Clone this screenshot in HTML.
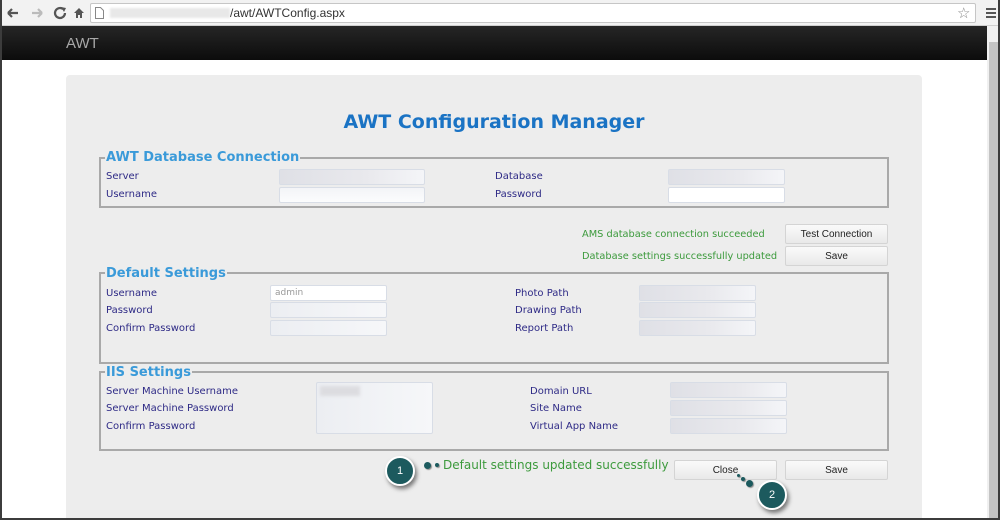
<!DOCTYPE html>
<html><head><meta charset="utf-8"><style>
*{margin:0;padding:0;box-sizing:border-box}
body{width:1000px;height:520px;overflow:hidden;background:#fff;font-family:"DejaVu Sans","Liberation Sans",sans-serif;position:relative}
.a{position:absolute}
.frame{position:absolute;left:0;top:0;width:1000px;height:520px;border:2px solid #3c3c3c;border-top:none;pointer-events:none}
.chrome{left:0;top:0;width:1000px;height:26px;background:#f2f2f2;border-bottom:1px solid #cfcfcf}
.url{left:90px;top:3px;width:886px;height:20px;background:#fff;border:1px solid #c6c6c6;border-radius:2px}
.nav{left:0;top:26px;width:988px;height:34px;background:linear-gradient(#262626,#0c0c0c)}
.sb{left:987px;top:26px;width:13px;height:494px;background:#f0f0f0}
.panel{left:66px;top:75px;width:856px;height:445px;background:#ededed;border-radius:4px 4px 0 0}
.fs{border:2px solid #a9a9a9}
.lg{font-weight:bold;font-size:13px;color:#3a9ad9;background:#ededed;padding:0 1px;line-height:14px}
.l{font-size:10px;color:#2e2a86;line-height:12px}
.in{background:linear-gradient(#f3f4f7,#fbfcfd);border:1px solid #d8dde6;border-radius:2px;height:16px}
.blur{background:linear-gradient(90deg,#dfe0e6,#e9e9ed 60%,#f4f5f8)}
.lt{background:linear-gradient(90deg,#eceef2,#f6f7f9)}
.g{font-size:9.8px;color:#3c9a3c;line-height:12px}
.btn{background:linear-gradient(#fafafa,#e9e9e9);border:1px solid #d4d4d4;border-radius:2px;font-family:"Liberation Sans",sans-serif;font-size:10px;color:#222;text-align:center;line-height:20px;height:20px}
.c{width:30px;height:30px;border-radius:50%;background:#1c5a5e;border:2px solid #fff;box-shadow:2px 3px 4px rgba(0,0,0,.5);color:#fff;font-family:"Liberation Sans",sans-serif;font-size:11px;text-align:center;line-height:26px}
.d{border-radius:50%;background:#1c5a5e;box-shadow:1px 1px 1px rgba(0,0,0,.4)}
</style></head><body>
<div class="a chrome"></div>
<svg class="a" style="left:4px;top:5px" width="82" height="16" viewBox="0 0 82 16">
<path d="M4 8h10M4 8l4-4M4 8l4 4" stroke="#555" stroke-width="2.2" fill="none"/>
<path d="M28 8h10M38 8l-4-4M38 8l-4 4" stroke="#bbb" stroke-width="2.2" fill="none"/>
<path d="M59 4a5 5 0 1 0 2 4" stroke="#555" stroke-width="2.2" fill="none"/><path d="M57 2l5 1-2 4z" fill="#555"/>
<path d="M70 8l5-5 5 5h-2v5h-2v-3h-2v3h-2v-5z" fill="#555"/>
</svg>
<div class="a url"></div>
<svg class="a" style="left:95px;top:7px" width="9" height="12"><path d="M.5.5h5l3 3v8h-8z" fill="#fff" stroke="#888"/></svg>
<div class="a" style="left:110px;top:8px;width:120px;height:10px;background:#e8e8e8;filter:blur(1px)"></div>
<div class="a" style="left:230px;top:6px;font-family:'Liberation Sans',sans-serif;font-size:12px;color:#333">/awt/AWTConfig.aspx</div>
<div class="a" style="left:957px;top:4px;font-size:15px;color:#888">☆</div>
<div class="a" style="left:986px;top:8px;width:10px;height:2px;background:#555;box-shadow:0 4px #555,0 8px #555"></div>
<div class="a nav"></div>
<div class="a" style="left:66px;top:35px;font-family:'Liberation Sans',sans-serif;font-size:15px;color:#a8a8a8">AWT</div>
<div class="a sb"><div style="position:absolute;left:2px;top:16px;width:9px;height:478px;background:#c4c4c4"></div></div>
<div class="a panel"></div>
<div class="a" style="left:66px;top:111px;width:856px;text-align:center;font-weight:bold;font-size:19px;color:#1a73c4">AWT Configuration Manager</div>

<div class="a fs" style="left:99px;top:157px;width:790px;height:51px"></div>
<div class="a lg" style="left:105px;top:151px">AWT Database Connection</div>
<div class="a l" style="left:106px;top:171px">Server</div>
<div class="a l" style="left:106px;top:189px">Username</div>
<div class="a in blur" style="left:279px;top:169px;width:146px"></div>
<div class="a in" style="left:279px;top:187px;width:146px"></div>
<div class="a l" style="left:495px;top:171px">Database</div>
<div class="a l" style="left:495px;top:189px">Password</div>
<div class="a in blur" style="left:668px;top:169px;width:117px"></div>
<div class="a in" style="left:668px;top:187px;width:117px;background:#fff"></div>

<div class="a g" style="left:582px;top:229px">AMS database connection succeeded</div>
<div class="a g" style="left:582px;top:251px">Database settings successfully updated</div>
<div class="a btn" style="left:785px;top:224px;width:103px">Test Connection</div>
<div class="a btn" style="left:785px;top:246px;width:103px">Save</div>

<div class="a fs" style="left:99px;top:272px;width:790px;height:92px"></div>
<div class="a lg" style="left:105px;top:267px">Default Settings</div>
<div class="a l" style="left:106px;top:288px">Username</div>
<div class="a l" style="left:106px;top:305px">Password</div>
<div class="a l" style="left:106px;top:323px">Confirm Password</div>
<div class="a in" style="left:270px;top:285px;width:117px;background:#fff;font-size:9px;color:#999;padding-left:4px;line-height:14px">admin</div>
<div class="a in lt" style="left:270px;top:302px;width:117px"></div>
<div class="a in lt" style="left:270px;top:320px;width:117px"></div>
<div class="a l" style="left:515px;top:288px">Photo Path</div>
<div class="a l" style="left:515px;top:305px">Drawing Path</div>
<div class="a l" style="left:515px;top:323px">Report Path</div>
<div class="a in blur" style="left:639px;top:285px;width:117px"></div>
<div class="a in blur" style="left:639px;top:302px;width:117px"></div>
<div class="a in blur" style="left:639px;top:320px;width:117px"></div>

<div class="a fs" style="left:99px;top:371px;width:790px;height:80px"></div>
<div class="a lg" style="left:105px;top:366px">IIS Settings</div>
<div class="a l" style="left:106px;top:386px">Server Machine Username</div>
<div class="a l" style="left:106px;top:403px">Server Machine Password</div>
<div class="a l" style="left:106px;top:421px">Confirm Password</div>
<div class="a in lt" style="left:316px;top:382px;width:117px;height:52px"></div>
<div class="a" style="left:320px;top:386px;width:40px;height:10px;background:#dcdce0;filter:blur(1.5px)"></div>
<div class="a l" style="left:530px;top:386px">Domain URL</div>
<div class="a l" style="left:530px;top:403px">Site Name</div>
<div class="a l" style="left:530px;top:421px">Virtual App Name</div>
<div class="a in blur" style="left:670px;top:382px;width:117px"></div>
<div class="a in blur" style="left:670px;top:400px;width:117px"></div>
<div class="a in blur" style="left:670px;top:418px;width:117px"></div>

<div class="a" style="left:443px;top:458px;font-size:12px;color:#3c9a3c">Default settings updated successfully</div>
<div class="a btn" style="left:674px;top:460px;width:103px">Close</div>
<div class="a btn" style="left:785px;top:460px;width:103px">Save</div>

<div class="a d" style="left:424px;top:462px;width:7px;height:7px"></div>
<div class="a d" style="left:435px;top:463px;width:4px;height:4px"></div>
<div class="a c" style="left:385px;top:456px">1</div>
<div class="a d" style="left:737px;top:474px;width:3px;height:3px"></div>
<div class="a d" style="left:741px;top:477px;width:4px;height:4px"></div>
<div class="a d" style="left:746px;top:480px;width:7px;height:7px"></div>
<div class="a c" style="left:757px;top:480px">2</div>
<div class="frame"></div>
</body></html>
